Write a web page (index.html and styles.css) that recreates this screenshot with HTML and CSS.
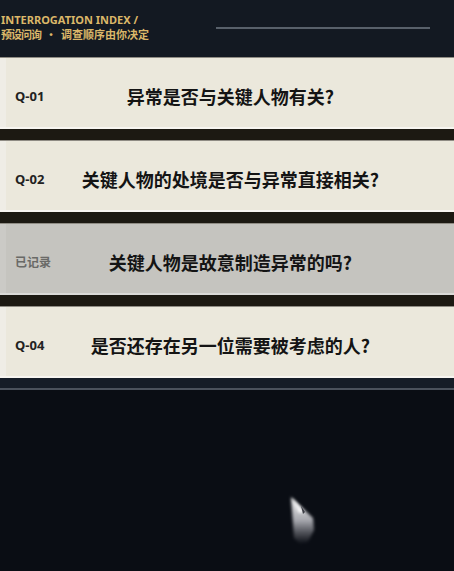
FILE: index.html
```html
<!DOCTYPE html>
<html lang="zh">
<head>
<meta charset="utf-8">
<title>Interrogation Index</title>
<link rel="stylesheet" href="styles.css">
</head>
<body>
<div class="page">
  <header class="head">
    <div class="titles">
      <div class="en">INTERROGATION INDEX /</div>
      <div class="cn"><span class="lead">预设问询</span><span class="dot">·</span>调查顺序由你决定</div>
    </div>
    <div class="rule"></div>
  </header>
  <ul class="list">
    <li class="card"><span class="label">Q-01</span><span class="q">异常是否与关键人物有关?</span></li>
    <li class="card"><span class="label">Q-02</span><span class="q">关键人物的处境是否与异常直接相关?</span></li>
    <li class="card done"><span class="label">已记录</span><span class="q">关键人物是故意制造异常的吗?</span></li>
    <li class="card"><span class="label">Q-04</span><span class="q">是否还存在另一位需要被考虑的人?</span></li>
  </ul>
  <div class="strip"></div>
  <div class="bottom">
    <svg class="cursor" width="40" height="60" viewBox="0 0 40 60" aria-hidden="true">
      <defs>
        <filter id="blur" x="-50%" y="-50%" width="200%" height="200%">
          <feGaussianBlur stdDeviation="1.6"/>
        </filter>
        <linearGradient id="fade" x1="0" y1="0" x2="0" y2="1">
          <stop offset="0" stop-color="#ffffff" stop-opacity="0.95"/>
          <stop offset="0.5" stop-color="#e8e8ee" stop-opacity="0.7"/>
          <stop offset="1" stop-color="#c8c8d0" stop-opacity="0"/>
        </linearGradient>
      </defs>
      <path d="M5 3 L8 44 L14 50 L22 48 L28 36 L27 24 Z" fill="url(#fade)" filter="url(#blur)"/>
      <path d="M6 4 L18 18 L13 19 Z" fill="#ffffff" opacity="0.9" filter="url(#blur)"/>
      <path d="M15 12 L19 18 L17 20 Z" fill="#1a1c24" opacity="0.8"/>
    </svg>
  </div>
</div>
</body>
</html>
```

FILE: styles.css
```css
* { box-sizing: border-box; }
html, body { margin: 0; padding: 0; }
body {
  background: #0a0d14;
  width: 454px;
  height: 571px;
  overflow: hidden;
  font-family: "Noto Sans", "Noto Sans CJK SC", sans-serif;
}
.page {
  display: flex;
  flex-direction: column;
  height: 571px;
}
.head {
  height: 57px;
  background: #131922;
  display: flex;
  align-items: flex-start;
  padding-top: 13px;
}
.titles {
  color: #dbb769;
  font-weight: 700;
}
.en {
  font-size: 11px;
  line-height: 14px;
  padding-left: 1px;
}
.cn {
  font-family: "Noto Sans CJK SC", sans-serif;
  font-size: 11px;
  line-height: 14px;
  padding-left: 1px;
}
.lead {
  letter-spacing: -1px;
}
.dot {
  display: inline-block;
  width: 20px;
  text-align: center;
}
.rule {
  margin-left: auto;
  margin-right: 24px;
  margin-top: 14px;
  width: 214px;
  height: 2px;
  background: #58606a;
}
.list {
  list-style: none;
  margin: 0;
  padding: 0;
  display: flex;
  flex-direction: column;
  gap: 11px;
  background: #1c1912;
}
.card {
  height: 72px;
  display: grid;
  grid-template-columns: 55px 1fr;
  align-items: center;
  padding: 6px 63px 0 15px;
  background: linear-gradient(to right, #efede6 0, #efede6 6px, #ebe8dc 6px);
  border-bottom: 2px solid #f7f5f0;
  border-top: 1px solid #8f8c84;
}
.card.done {
  background: linear-gradient(to right, #cbcac6 0, #cbcac6 6px, #c5c4bf 6px);
  border-bottom-color: #dadad7;
}
.label {
  font-size: 13px;
  font-weight: 700;
  color: #222222;
  font-family: "Noto Sans", "Noto Sans CJK SC", sans-serif;
}
.done .label {
  color: #6a6a67;
  font-family: "Noto Sans CJK SC", sans-serif;
  font-size: 12px;
}
.q {
  text-align: center;
  font-family: "Noto Sans CJK SC", sans-serif;
  font-size: 18px;
  font-weight: 700;
  color: #141414;
  white-space: nowrap;
}
.strip {
  height: 12px;
  background: #151d27;
  border-bottom: 2px solid #4a525c;
}
.bottom {
  flex: 1;
  position: relative;
  background: #0a0d14;
}
.cursor {
  position: absolute;
  left: 286px;
  top: 104px;
}
```
